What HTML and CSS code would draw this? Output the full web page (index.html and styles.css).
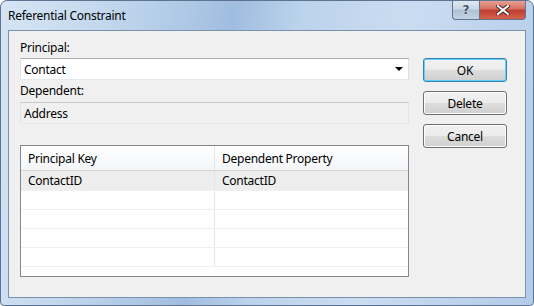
FILE: index.html
```html
<!DOCTYPE html>
<html lang="en">

<head>
    <meta charset="UTF-8">
    <title>Referential Constraint</title>
    <link rel="stylesheet" href="styles.css">
</head>

<body>
    <div id="window">
        <div id="titlebar">
            <span id="title">Referential Constraint</span>
            <div id="caption-buttons">
                <div class="cap help">?</div>
                <div class="cap close">
                    <svg width="14" height="10" viewBox="0 0 14 10">
                        <path d="M2 1 L12 9 M12 1 L2 9" stroke="#4a2a28" stroke-width="4" stroke-linecap="square" />
                        <path d="M2 1 L12 9 M12 1 L2 9" stroke="#ffffff" stroke-width="2" stroke-linecap="square" />
                    </svg>
                </div>
            </div>
        </div>

        <div id="client">
            <div id="fields">
                <label class="field-label">Principal:</label>
                <div class="combo">
                    <span>Contact</span>
                    <span class="arrow"></span>
                </div>

                <label class="field-label">Dependent:</label>
                <div class="textbox">Address</div>

                <div class="grid">
                    <div class="grid-row header">
                        <div class="cell">Principal Key</div>
                        <div class="cell">Dependent Property</div>
                    </div>
                    <div class="grid-row selected">
                        <div class="cell">ContactID</div>
                        <div class="cell">ContactID</div>
                    </div>
                    <div class="grid-row"><div class="cell"></div><div class="cell"></div></div>
                    <div class="grid-row"><div class="cell"></div><div class="cell"></div></div>
                    <div class="grid-row"><div class="cell"></div><div class="cell"></div></div>
                    <div class="grid-row"><div class="cell"></div><div class="cell"></div></div>
                </div>
            </div>

            <div id="buttons">
                <button class="btn default">OK</button>
                <button class="btn">Delete</button>
                <button class="btn">Cancel</button>
            </div>
        </div>
    </div>
</body>

</html>
```

FILE: styles.css
```css
* {
    margin: 0;
    padding: 0;
    box-sizing: border-box;
}

body {
    width: 534px;
    height: 306px;
    overflow: hidden;
    font-family: "Noto Sans", "Open Sans", sans-serif;
    font-size: 12px;
    letter-spacing: -0.25px;
    color: #000;
    background: #fff;
}

/* --------  WINDOW FRAME ------------------- */
#window {
    width: 534px;
    height: 306px;
    border: 1px solid #5d7390;
    border-radius: 7px 7px 4px 4px;
    background: linear-gradient(100deg, #d6e5f4 0%, #c3d8ee 18%, #abc6e4 34%, #9fbde0 40%, #bcd3ec 52%, #cadcf0 70%, #b3cceb 100%);
    padding: 0 7px 7px 7px;
    display: flex;
    flex-direction: column;
}

#titlebar {
    height: 29px;
    display: flex;
    justify-content: space-between;
}

#title {
    padding-top: 7px;
    line-height: 15px;
}

#caption-buttons {
    display: flex;
    height: 19px;
}

.cap {
    height: 19px;
    display: flex;
    align-items: center;
    justify-content: center;
    border: 1px solid #62738a;
    border-top: none;
}

.help {
    width: 27px;
    border-right: none;
    border-radius: 0 0 0 4px;
    background: linear-gradient(#dfe8f2 0%, #c9d6e4 45%, #afc0d3 50%, #c2d3e5 100%);
    color: #47536a;
    font-family: "DejaVu Sans", sans-serif;
    font-weight: bold;
    font-size: 12px;
    letter-spacing: 0;
    text-shadow: 0 0 2px #fff;
}

.close {
    width: 47px;
    border-radius: 0 0 4px 0;
    background: linear-gradient(#e7a093 0%, #d56f60 45%, #c13e2f 50%, #d4624f 100%);
}

/* --------  CLIENT AREA ------------------- */
#client {
    flex: 1;
    background-color: #f0f0f0;
    border: 1px solid #7d91aa;
    display: flex;
    padding: 9px 0 0 11px;
}

#fields {
    width: 389px;
    display: flex;
    flex-direction: column;
}

.field-label {
    line-height: 15px;
}

.combo {
    height: 22px;
    margin-top: 3px;
    margin-bottom: 3px;
    background: #fff;
    border: 1px solid #abadb3;
    border-color: #abadb3 #dbdfe6 #e3e9ef #e2e3ea;
    display: flex;
    align-items: center;
    justify-content: space-between;
    padding: 0 4px 0 3px;
}

.arrow {
    width: 0;
    height: 0;
    border-left: 4px solid transparent;
    border-right: 4px solid transparent;
    border-top: 4px solid #000;
    margin-right: 1px;
}

.textbox {
    height: 22px;
    margin-top: 4px;
    background: #f0f0f0;
    border: 1px solid #abadb3;
    border-color: #c6c8cc #e2e3ea #e3e9ef #e2e3ea;
    display: flex;
    align-items: center;
    padding: 0 3px;
}

/* --------  GRID ------------------- */
.grid {
    margin-top: 21px;
    height: 132px;
    border: 1px solid #828790;
    background: #fff;
}

.grid-row {
    display: flex;
    height: 19px;
    border-bottom: 1px solid #f0f0f0;
}

.grid-row.header {
    height: 25px;
    background: linear-gradient(#ffffff, #f3f5f8);
    border-bottom: 1px solid #d5d5d5;
}

.grid-row.selected {
    height: 20px;
    background: #ededed;
}

.cell {
    display: flex;
    align-items: center;
    padding-left: 7px;
}

.cell:first-child {
    width: 194px;
    border-right: 1px solid #e5e5e5;
}

.cell:last-child {
    flex: 1;
}

/* --------  BUTTONS ------------------- */
#buttons {
    display: flex;
    flex-direction: column;
    gap: 9px;
    margin-left: 14px;
    padding-top: 18px;
}

.btn {
    width: 84px;
    height: 24px;
    font-family: inherit;
    font-size: 12px;
    letter-spacing: inherit;
    color: #000;
    border: 1px solid #707070;
    border-radius: 3px;
    background: linear-gradient(#f2f2f2 0%, #ebebeb 50%, #dddddd 51%, #cfcfcf 100%);
    box-shadow: inset 0 0 0 1px #fcfcfc;
}

.btn.default {
    border-color: #3c7fb1;
    box-shadow: inset 0 0 0 1px #5fd2f9;
}
```
